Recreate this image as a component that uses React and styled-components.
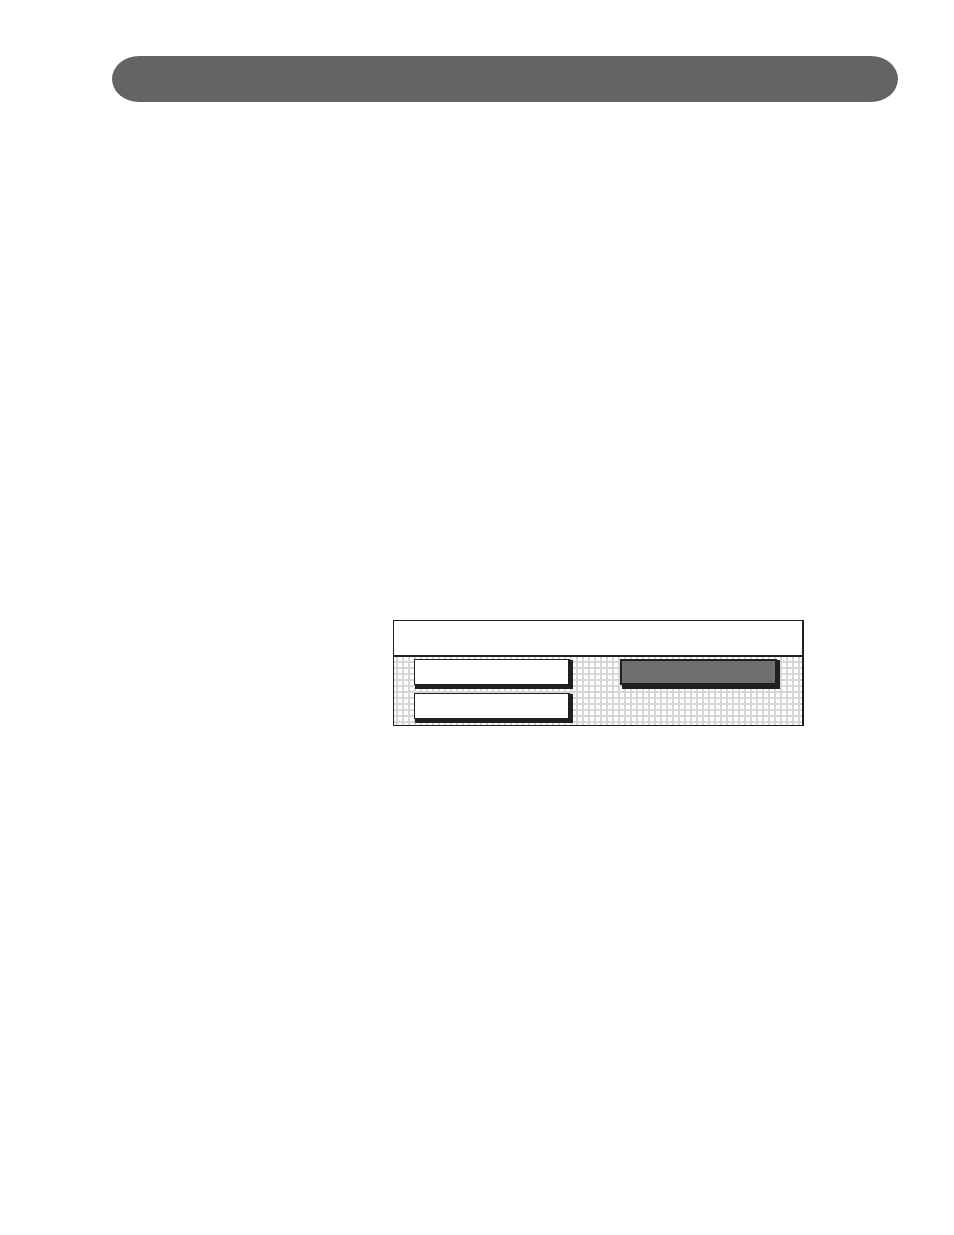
import React from "react";
import styled, { createGlobalStyle } from "styled-components";

const GlobalStyle = createGlobalStyle`
  body {
    margin: 0;
    background: #ffffff;
    font-family: "Liberation Sans", sans-serif;
  }
`;

const Page = styled.div`
  box-sizing: border-box;
  min-height: 100vh;
  padding: 56px 56px 56px 112px;
`;

const Banner = styled.header`
  height: 46px;
  border-radius: 27px / 23px;
  background: #626466;
`;

const Main = styled.main`
  padding: 518px 94px 0 281px;
`;

const Panel = styled.section`
  border: 1px solid #231f20;
  border-right-width: 2px;
`;

const PanelTitle = styled.div`
  height: 34px;
  border-bottom: 2px solid #231f20;
`;

const Options = styled.div`
  display: grid;
  grid-template-columns: 156fr 157fr;
  gap: 8px 50px;
  padding: 2px 25px 6px 20px;
  background-color: #ffffff;
  background-image:
    linear-gradient(to right, #d6d7d8 2px, transparent 2px),
    linear-gradient(to bottom, #d6d7d8 2px, transparent 2px);
  background-size: 6px 6px;
  background-position: 2px 0, 0 4px;
`;

const OptionButton = styled.button`
  height: 26px;
  padding: 0;
  border: solid #231f20;
  border-width: ${(p) => (p.$selected ? "2px" : "1px 2px 1px 1px")};
  border-radius: 0;
  background: ${(p) => (p.$selected ? "#6d6f71" : "#ffffff")};
  box-shadow: ${(p) =>
    p.$selected
      ? "3px 1px 0 #231f20, 3px 4px 0 #231f20, 2px 4px 0 #231f20"
      : "2px 3px 0 1px #231f20, 2px 2px 0 1px #231f20"};
`;

const options = [
  { id: "first", selected: false },
  { id: "second", selected: true },
  { id: "third", selected: false },
];

export default function App() {
  return (
    <>
      <GlobalStyle />
      <Page>
        <Banner />
        <Main>
          <Panel>
            <PanelTitle />
            <Options>
              {options.map((o) => (
                <OptionButton
                  key={o.id}
                  type="button"
                  aria-pressed={o.selected}
                  $selected={o.selected}
                />
              ))}
            </Options>
          </Panel>
        </Main>
      </Page>
    </>
  );
}
